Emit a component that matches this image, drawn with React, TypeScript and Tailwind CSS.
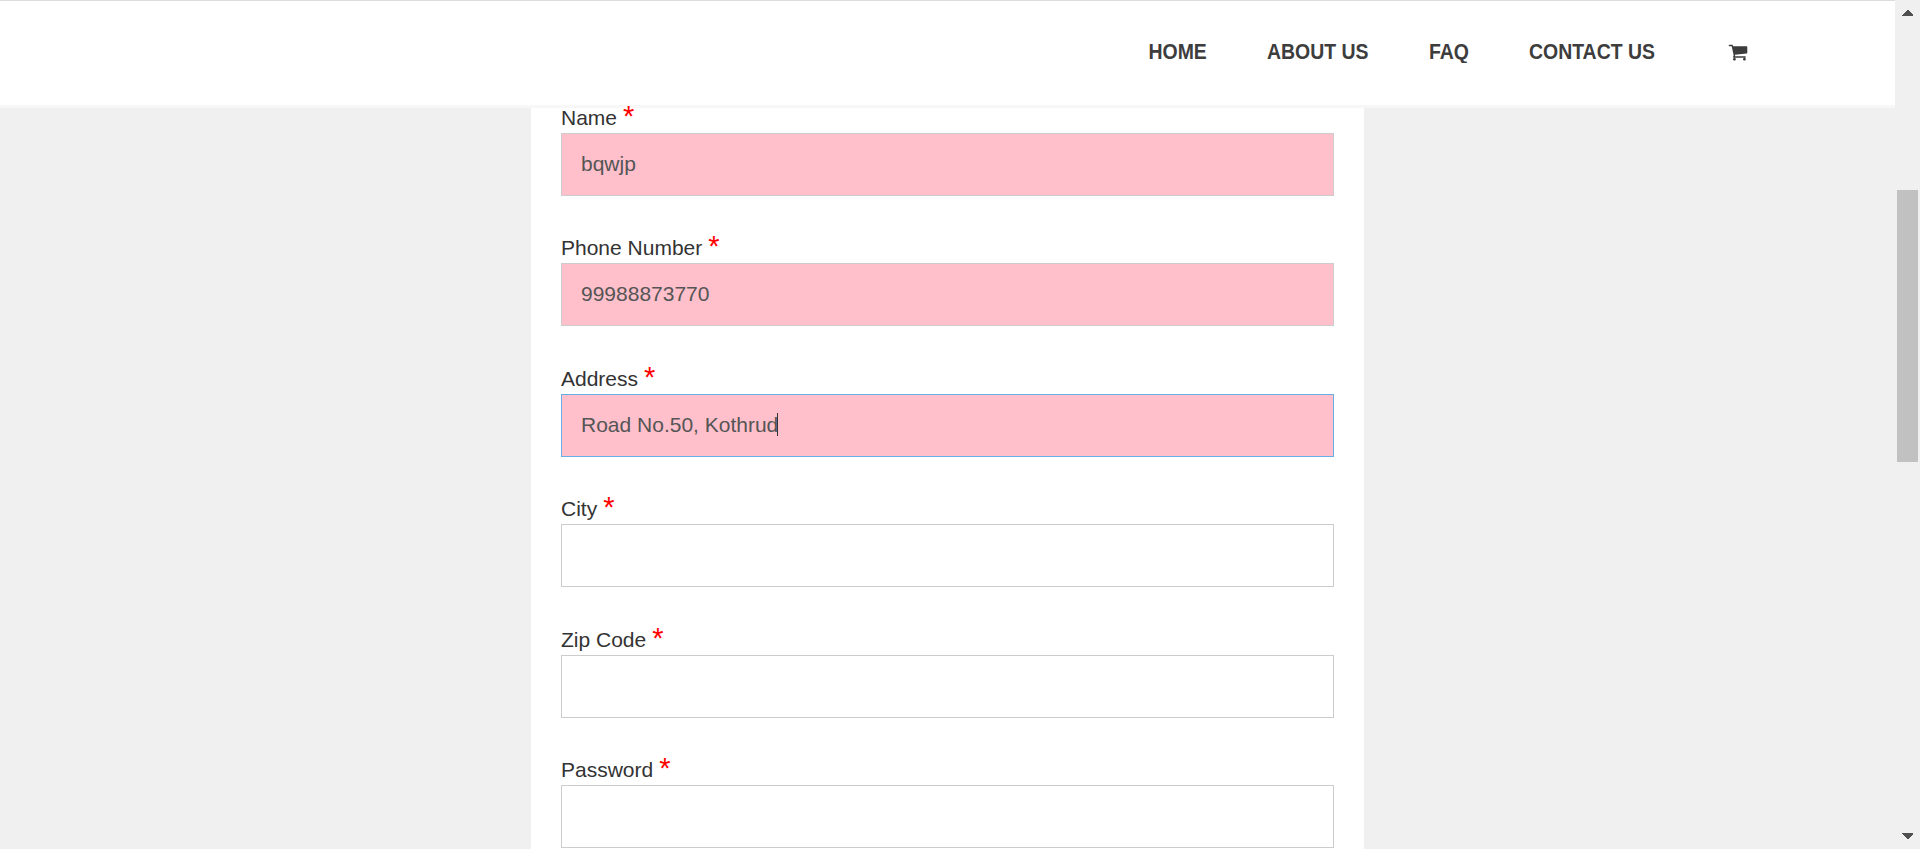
import React from "react";

type FieldProps = { label: string; value?: string; focused?: boolean };

function Field({ label, value = "", focused = false }: FieldProps) {
  return (
    <div className="h-[130.4px]">
      <div className="flex h-[25px] items-baseline text-[21px] leading-[25px] text-[#333]">
        <span className="leading-[17px]">{label}</span>
        <span className="relative top-px ml-[6px] text-[29px] leading-[14px] text-[#f00]">*</span>
      </div>
      <div
        className={`flex h-[63px] w-full items-center border px-[19px] pb-[2px] text-[21px] text-[#555] ${
          focused ? "border-[#66afe9]" : "border-[#ccc]"
        } ${value ? "bg-[#ffc0cb]" : "bg-white"}`}
      >
        <span className="whitespace-pre">{value}</span>
        {focused && <span className="-ml-px h-[23px] w-px bg-[#333]" />}
      </div>
    </div>
  );
}

const links = [
  { text: "HOME", width: "w-[58.5px]" },
  { text: "ABOUT US", width: "w-[102px]" },
  { text: "FAQ", width: "w-[40px]" },
  { text: "CONTACT US", width: "w-[127px]" },
];

function CartIcon() {
  return (
    <svg viewBox="0 0 1792 1792" className="mt-[41px] ml-[72px] size-5 shrink-0" fill="#3d3d3d">
      <path d="M704 1536q0 52-38 90t-90 38-90-38-38-90 38-90 90-38 90 38 38 90zm896 0q0 52-38 90t-90 38-90-38-38-90 38-90 90-38 90 38 38 90zm128-1088v512q0 24-16.5 42.5t-40.5 21.5l-1044 122q13 60 13 70 0 16-24 64h920q26 0 45 19t19 45-19 45-45 19h-1024q-26 0-45-19t-19-45q0-11 8-31.5t16-36 21.5-40 15.5-29.5l-177-823h-204q-26 0-45-19t-19-45 19-45 45-19h256q16 0 28.5 6.5t19.5 15.5 13 24.5 8 26 5.5 29.5 4.5 26h1201q26 0 45 19t19 45z" />
    </svg>
  );
}

export default function App() {
  return (
    <div className="flex h-[849px] w-[1920px] overflow-hidden bg-[#f0f0f0] font-['Liberation_Sans',Arial,sans-serif]">
      <div className="flex w-[1895px] flex-col">
        <header className="flex h-[108px] shrink-0 border-t border-b-3 border-t-[#dcdcdc] border-b-[#f7f7f7] bg-white pl-[1148.5px]">
          <nav className="flex h-[102px] origin-center scale-y-[1.1] items-center gap-[60px] text-[19.45px] font-bold text-[#3d3d3d]">
            {links.map((l) => (
              <a key={l.text} className={`whitespace-nowrap ${l.width}`}>
                {l.text}
              </a>
            ))}
          </nav>
          <CartIcon />
        </header>
        <main className="ml-[531px] h-[741px] w-[833px] shrink-0 bg-white px-[30px]">
          <Field label="Name" value="bqwjp" />
          <Field label="Phone Number" value="99988873770" />
          <Field label="Address" value="Road No.50, Kothrud" focused />
          <Field label="City" />
          <Field label="Zip Code" />
          <Field label="Password" />
        </main>
      </div>
      <div className="flex w-[25px] flex-col items-center bg-[#f0f0f0]">
        <svg width="11" height="6" viewBox="0 0 11 6" className="mt-[10px] shrink-0" shapeRendering="crispEdges">
          <path d="M5 0h1l5 5v1H0V5z" fill="#505050" />
        </svg>
        <div className="mt-[174px] mr-px h-[272px] w-[21px] shrink-0 bg-[#c1c1c1]" />
        <svg width="11" height="6" viewBox="0 0 11 6" className="mt-[371px] shrink-0" shapeRendering="crispEdges">
          <path d="M0 0h11v1L6 6H5L0 1z" fill="#505050" />
        </svg>
      </div>
    </div>
  );
}
